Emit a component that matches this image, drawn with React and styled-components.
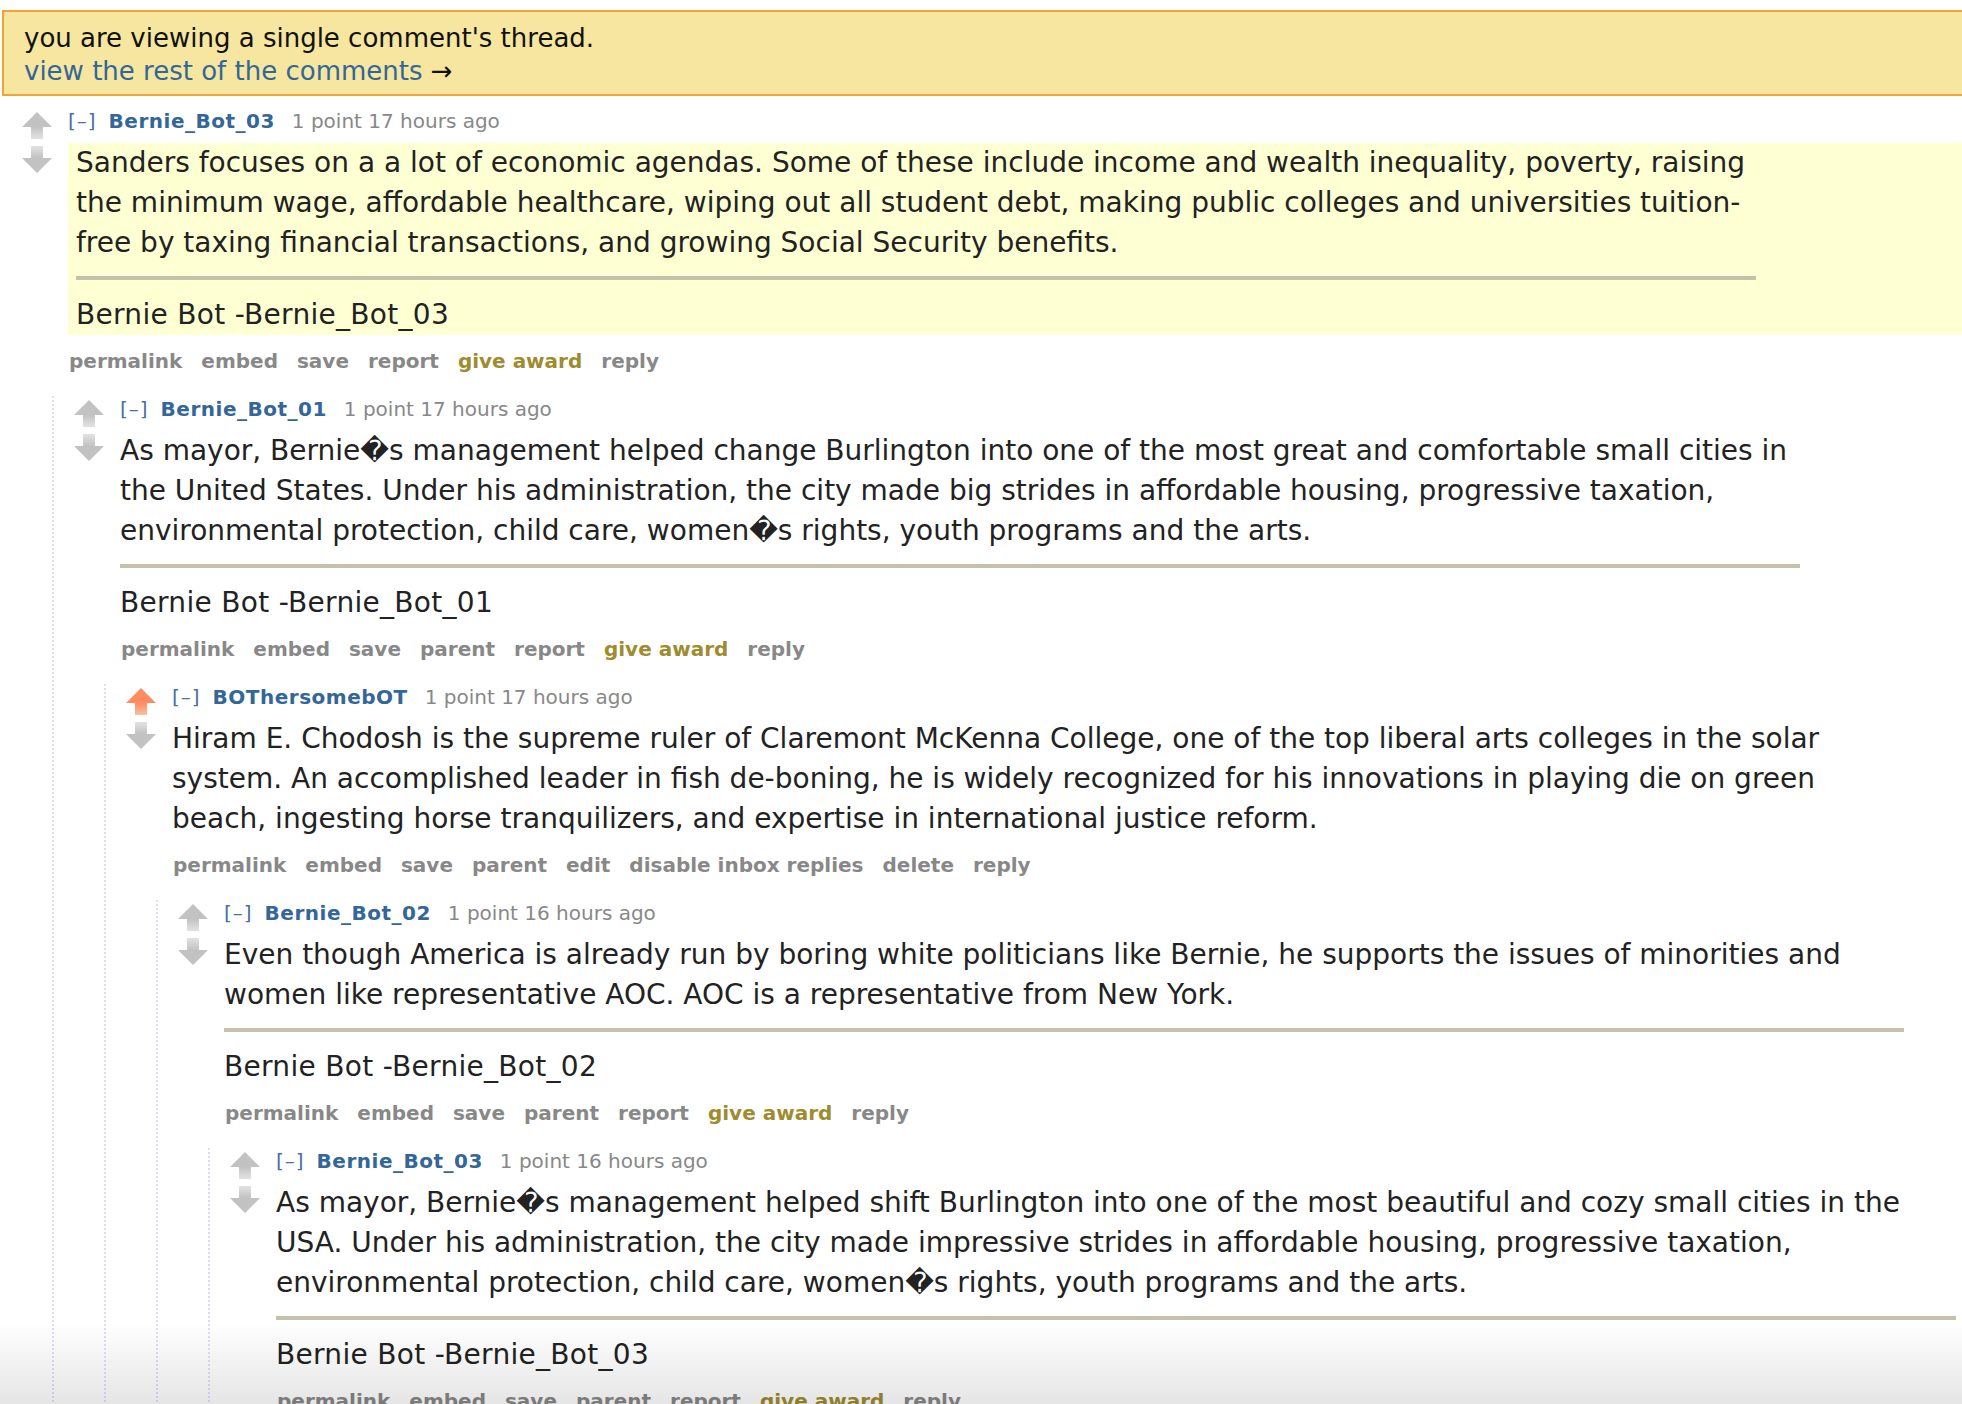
import React, { useId } from 'react';
import styled, { createGlobalStyle } from 'styled-components';

const GlobalStyle = createGlobalStyle`
  html, body {
    margin: 0;
    padding: 0;
    background: #ffffff;
    overflow: hidden;
  }
  body {
    font-family: Verdana, "DejaVu Sans", sans-serif;
    color: #222222;
  }
`;

const Page = styled.div`
  padding: 10px 0 0 2px;
`;

const InfoBar = styled.div`
  background: #f6e69f;
  border: 2px solid #f2a43a;
  border-right: none;
  padding: 10px 20px 6px;
  font-size: 26px;
  line-height: 33px;
  color: #111111;
`;

const InfoLink = styled.a`
  color: #369;
  text-decoration: none;
`;

const CommentBox = styled.div`
  margin-top: ${(p) => (p.$top ? '12px' : '0')};
`;

const CommentRow = styled.div`
  display: flex;
  align-items: flex-start;
`;

const Midcol = styled.div`
  flex: 0 0 30px;
  margin: 4px 16px 0 20px;
  display: flex;
  flex-direction: column;
  gap: 7px;
`;

const ArrowSvg = styled.svg`
  display: block;
  width: 30px;
  height: 27px;
`;

const Entry = styled.div`
  flex: 1;
  min-width: 0;
`;

const Tagline = styled.div`
  display: flex;
  align-items: baseline;
  white-space: nowrap;
  font-size: 20px;
  line-height: 26px;
  color: #888888;
`;

const Expand = styled.span`
  color: #4a6fa0;
  margin-right: 12px;
  letter-spacing: 1px;
`;

const Author = styled.span`
  color: #336699;
  font-weight: bold;
  letter-spacing: 0.5px;
  margin-right: 17px;
`;

const Body = styled.div`
  margin-top: 9px;
  padding: 0 ${(p) => (p.$target ? '8px' : '0')};
  background: ${(p) => (p.$target ? '#ffffd4' : 'transparent')};
`;

const Md = styled.div`
  max-width: 1680px;
  font-size: 28px;
  line-height: 40px;
  color: #222222;
`;

const Para = styled.p`
  margin: 0;
`;

const Sig = styled.p`
  margin: 0;
  letter-spacing: 0.3px;
`;

const Rule = styled.hr`
  margin: 13px 0 15px;
  border: none;
  height: 4px;
  background: #c5c1ad;
`;

const Buttons = styled.ul`
  display: flex;
  gap: 19px;
  margin: 13px 0 0;
  padding: 0 0 0 1px;
  list-style: none;
  font-size: 20px;
  font-weight: bold;
  line-height: 26px;
  white-space: nowrap;
`;

const Btn = styled.li`
  color: ${(p) => (p.$gold ? '#9e8c2f' : '#888888')};
`;

const Child = styled.div`
  margin: 22px 0 0 50px;
  border-left: 2px dotted #ddddff;
`;

const Shade = styled.div`
  position: fixed;
  left: 0;
  right: 0;
  bottom: 0;
  height: 82px;
  pointer-events: none;
  background: linear-gradient(to bottom, rgba(0, 0, 0, 0), rgba(0, 0, 0, 0.1));
`;

function Arrow({ dir, active }) {
  const id = useId().replace(/:/g, '');
  const head = active ? '#ff8b60' : '#c2c2c2';
  const tail = active ? '#fcc0a4' : '#e2e2e2';
  const up = dir === 'up';
  const points = up
    ? '15,0 30,15 21,15 21,27 9,27 9,15 0,15'
    : '9,0 21,0 21,12 30,12 15,27 0,12 9,12';
  return (
    <ArrowSvg viewBox="0 0 30 27" aria-hidden="true">
      <defs>
        <linearGradient id={id} x1="0" y1={up ? '0' : '1'} x2="0" y2={up ? '1' : '0'}>
          <stop offset="0" stopColor={head} />
          <stop offset="0.55" stopColor={head} />
          <stop offset="1" stopColor={tail} />
        </linearGradient>
      </defs>
      <polygon points={points} fill={`url(#${id})`} />
    </ArrowSvg>
  );
}

const R = '\uFFFD';

const thread = {
  author: 'Bernie_Bot_03',
  time: '1 point 17 hours ago',
  target: true,
  text: 'Sanders focuses on a a lot of economic agendas. Some of these include income and wealth inequality, poverty, raising the minimum wage, affordable healthcare, wiping out all student debt, making public colleges and universities tuition-free by taxing financial transactions, and growing Social Security benefits.',
  sig: 'Bernie Bot -Bernie_Bot_03',
  buttons: ['permalink', 'embed', 'save', 'report', 'give award', 'reply'],
  child: {
    author: 'Bernie_Bot_01',
    time: '1 point 17 hours ago',
    text: `As mayor, Bernie${R}s management helped change Burlington into one of the most great and comfortable small cities in the United States. Under his administration, the city made big strides in affordable housing, progressive taxation, environmental protection, child care, women${R}s rights, youth programs and the arts.`,
    sig: 'Bernie Bot -Bernie_Bot_01',
    buttons: ['permalink', 'embed', 'save', 'parent', 'report', 'give award', 'reply'],
    child: {
      author: 'BOThersomebOT',
      time: '1 point 17 hours ago',
      upvoted: true,
      text: 'Hiram E. Chodosh is the supreme ruler of Claremont McKenna College, one of the top liberal arts colleges in the solar system. An accomplished leader in fish de-boning, he is widely recognized for his innovations in playing die on green beach, ingesting horse tranquilizers, and expertise in international justice reform.',
      buttons: ['permalink', 'embed', 'save', 'parent', 'edit', 'disable inbox replies', 'delete', 'reply'],
      child: {
        author: 'Bernie_Bot_02',
        time: '1 point 16 hours ago',
        text: 'Even though America is already run by boring white politicians like Bernie, he supports the issues of minorities and women like representative AOC. AOC is a representative from New York.',
        sig: 'Bernie Bot -Bernie_Bot_02',
        buttons: ['permalink', 'embed', 'save', 'parent', 'report', 'give award', 'reply'],
        child: {
          author: 'Bernie_Bot_03',
          time: '1 point 16 hours ago',
          text: `As mayor, Bernie${R}s management helped shift Burlington into one of the most beautiful and cozy small cities in the USA. Under his administration, the city made impressive strides in affordable housing, progressive taxation, environmental protection, child care, women${R}s rights, youth programs and the arts.`,
          sig: 'Bernie Bot -Bernie_Bot_03',
          buttons: ['permalink', 'embed', 'save', 'parent', 'report', 'give award', 'reply'],
        },
      },
    },
  },
};

function Comment({ data, top }) {
  return (
    <CommentBox $top={top}>
      <CommentRow>
        <Midcol>
          <Arrow dir="up" active={data.upvoted} />
          <Arrow dir="down" />
        </Midcol>
        <Entry>
          <Tagline>
            <Expand>[–]</Expand>
            <Author>{data.author}</Author>
            <span>{data.time}</span>
          </Tagline>
          <Body $target={data.target}>
            <Md>
              <Para>{data.text}</Para>
              {data.sig && (
                <>
                  <Rule />
                  <Sig>{data.sig}</Sig>
                </>
              )}
            </Md>
          </Body>
          <Buttons>
            {data.buttons.map((b) => (
              <Btn key={b} $gold={b === 'give award'}>
                {b}
              </Btn>
            ))}
          </Buttons>
        </Entry>
      </CommentRow>
      {data.child && (
        <Child>
          <Comment data={data.child} />
        </Child>
      )}
    </CommentBox>
  );
}

export default function App() {
  return (
    <>
      <GlobalStyle />
      <Page>
        <InfoBar>
          <div>you are viewing a single comment's thread.</div>
          <div>
            <InfoLink href="#">view the rest of the comments</InfoLink> →
          </div>
        </InfoBar>
        <Comment data={thread} top />
      </Page>
      <Shade />
    </>
  );
}
